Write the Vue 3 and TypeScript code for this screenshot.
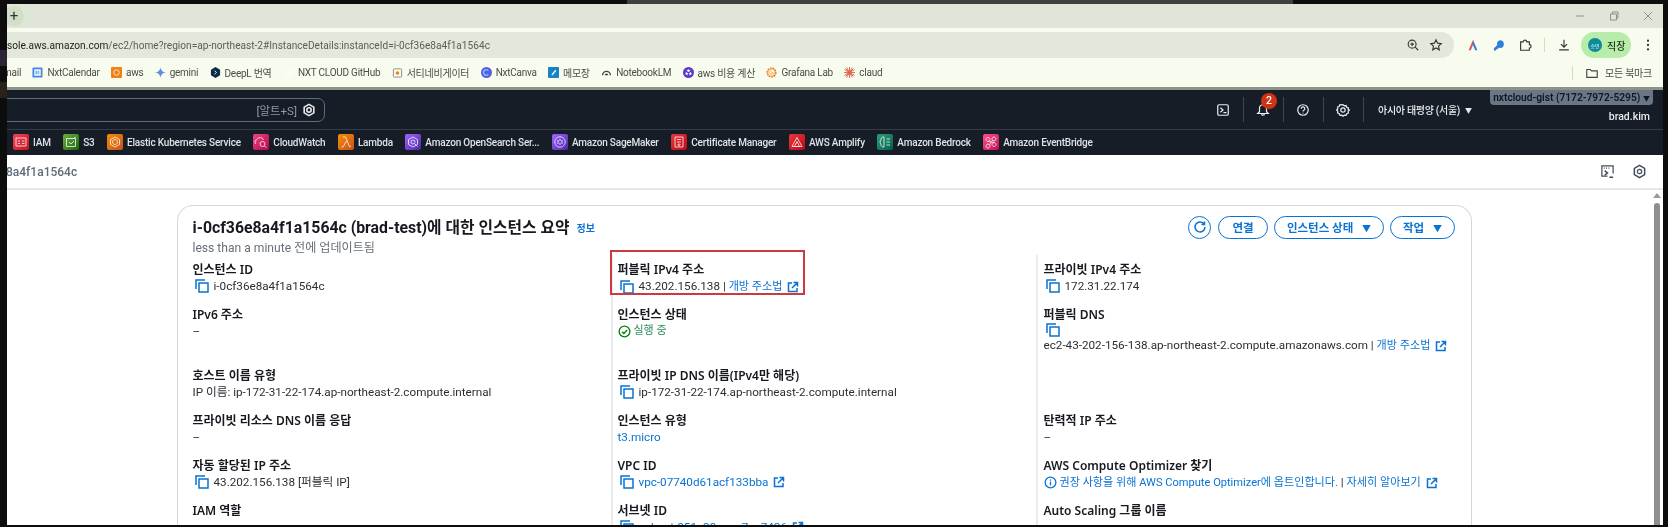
<script setup lang="ts">
interface Bookmark { label: string; icon: string }
interface Service { label: string; cls: string; d: string }
interface Field {
  label: string
  size?: 'tall' | 'xtall'
  value?: string
  link?: boolean
  copy?: boolean
  external?: boolean
  run?: boolean
  dash?: boolean
  boxed?: boolean
  dns?: boolean
  ip?: boolean
  info?: boolean
}

const bookmarks: Bookmark[] = [
  { label: 'NxtCalendar', icon: 'cal' },
  { label: 'aws', icon: 'aws' },
  { label: 'gemini', icon: 'gemini' },
  { label: 'DeepL 번역', icon: 'deepl' },
  { label: 'NXT CLOUD GitHub', icon: 'blank' },
  { label: '서티네비게이터', icon: 'nav' },
  { label: 'NxtCanva', icon: 'canva' },
  { label: '메모장', icon: 'memo' },
  { label: 'NotebookLM', icon: 'lm' },
  { label: 'aws 비용 계산', icon: 'cost' },
  { label: 'Grafana Lab', icon: 'grafana' },
  { label: 'claud', icon: 'claud' }
]

const services: Service[] = [
  { label: 'IAM', cls: 'red', d: 'M3 4h10v8H3zM5 7h2M5 9.500h2M9 7h2.500M9 9.500h2.500' },
  { label: 'S3', cls: 'green', d: 'M3.500 4.500h9v8h-9zM6 8l2 2 3-3M11 4l2-1' },
  { label: 'Elastic Kubernetes Service', cls: 'orange', d: 'M8 3l4.500 2.500v5L8 13l-4.500-2.500v-5zM8 5.500a2.500 2.500 0 1 0 .01 0' },
  { label: 'CloudWatch', cls: 'pink', d: 'M3 10a2.500 2.500 0 0 1 1-4.500A3.500 3.500 0 0 1 10.500 6M7 10a2.500 2.500 0 1 0 5 0 2.500 2.500 0 1 0-5 0M11.500 12l2 1.500' },
  { label: 'Lambda', cls: 'orange', d: 'M5 3h2.500l4 9.500H13M8.500 7L5 13H3.500' },
  { label: 'Amazon OpenSearch Ser...', cls: 'violet', d: 'M8 3l4.500 2.500v5L8 13l-4.500-2.500v-5zM6 8a2 2 0 1 0 4 0 2 2 0 1 0-4 0M10 10l2.500 2.500' },
  { label: 'Amazon SageMaker', cls: 'violet', d: 'M8 2.800a5.200 5.200 0 1 0 .01 0M8 5v2M8 9v2M6 6v4M10 6v4' },
  { label: 'Certificate Manager', cls: 'crimson', d: 'M4 3h8v10H4zM6 5.500h4M6 8h4M8 10a1 1 0 1 0 .01 0' },
  { label: 'AWS Amplify', cls: 'crimson', d: 'M8 3.500L13 12.500H3zM8 7.500L10.500 12.500H5.500z' },
  { label: 'Amazon Bedrock', cls: 'teal', d: 'M7 3a2.500 2.500 0 0 0-3 3 2.500 2.500 0 0 0 0 4 2.500 2.500 0 0 0 3 3zM9.500 5H13M9.500 8H13M9.500 11H13' },
  { label: 'Amazon EventBridge', cls: 'magenta', d: 'M5 3.500a2 2 0 1 0 .01 0M11 8.500a2 2 0 1 0 .01 0M5 10a2 2 0 1 0 .01 0M11 3a2 2 0 1 0 .01 0M5.500 7l5 2M6 11l4-5' }
]

const col1: Field[] = [
  { label: '인스턴스 ID', value: 'i-0cf36e8a4f1a1564c', copy: true },
  { label: 'IPv6 주소', dash: true, size: 'tall' },
  { label: '호스트 이름 유형', value: 'IP 이름: ip-172-31-22-174.ap-northeast-2.compute.internal' },
  { label: '프라이빗 리소스 DNS 이름 응답', dash: true },
  { label: '자동 할당된 IP 주소', value: '43.202.156.138 [퍼블릭 IP]', copy: true },
  { label: 'IAM 역할', value: '' }
]
const col2: Field[] = [
  { label: '퍼블릭 IPv4 주소', value: '43.202.156.138', copy: true, boxed: true, ip: true },
  { label: '인스턴스 상태', value: '실행 중', run: true, size: 'tall' },
  { label: '프라이빗 IP DNS 이름(IPv4만 해당)', value: 'ip-172-31-22-174.ap-northeast-2.compute.internal', copy: true },
  { label: '인스턴스 유형', value: 't3.micro', link: true },
  { label: 'VPC ID', value: 'vpc-07740d61acf133bba', copy: true, link: true, external: true },
  { label: '서브넷 ID', value: 'subnet-051c33aaaa7ac7426', copy: true, link: true, external: true }
]
const col3: Field[] = [
  { label: '프라이빗 IPv4 주소', value: '172.31.22.174', copy: true },
  { label: '퍼블릭 DNS', dns: true, size: 'xtall' },
  { label: '탄력적 IP 주소', dash: true },
  { label: 'AWS Compute Optimizer 찾기', info: true },
  { label: 'Auto Scaling 그룹 이름', value: '' }
]
const columns: Field[][] = [col1, col2, col3]
</script>

<template>
  <div class="screen">
    <div class="topstrip"><div class="behind"></div></div>
    <div class="middle">
      <div class="leftstrip">
        <i class="ghost g1"></i>
        <i class="ghost g2"></i>
      </div>
      <div class="window">
        <div class="tabstrip">
          <span class="newtab">+</span>
          <div class="winctl">
            <svg viewBox="0 0 12 12"><path d="M2 6h8" /></svg>
            <svg viewBox="0 0 12 12"><path d="M2.500 4h6v6h-6zM4.500 4V2h5.500v6H8.500" /></svg>
            <svg viewBox="0 0 12 12"><path d="M2 2l8 8M10 2l-8 8" /></svg>
          </div>
        </div>

        <div class="toolbar">
          <div class="omnibox">
            <div class="url"><b>sole.aws.amazon.com</b>/ec2/home?region=ap-northeast-2#InstanceDetails:instanceId=i-0cf36e8a4f1a1564c</div>
            <svg class="tb" viewBox="0 0 16 16"><circle cx="7" cy="7" r="4.500" /><path d="M10.500 10.500L14 14M5 7h4M7 5v4" /></svg>
            <svg class="tb star" viewBox="0 0 16 16"><path d="M8 2l1.800 3.900 4.200.5-3.100 2.900.8 4.200L8 11.400l-3.700 2.100.8-4.200L2 6.400l4.200-.5z" /></svg>
          </div>
          <div class="exts">
            <svg class="ext" viewBox="0 0 16 16"><path class="fa" d="M8 2L3 14h2.500L8 8z" /><path class="fb" d="M8 2l5 12h-2.500L8 8z" /></svg>
            <svg class="ext" viewBox="0 0 16 16"><path class="fk" d="M9 2.500a4.500 4.500 0 1 1 .1 9l-1.500-.5-1 1.500-1.500 0-.2 1.500-2.400.5-.5-2.500 4-4A4.500 4.500 0 0 1 9 2.500z" /></svg>
            <svg class="tb" viewBox="0 0 16 16"><path d="M3 4.500h3a2 2 0 0 1 4 0h3v3a2 2 0 0 1 0 4v2.500H3z" /></svg>
            <i class="tsep"></i>
            <svg class="tb" viewBox="0 0 16 16"><path d="M8 2v8M4.500 7L8 10.500 11.500 7M2.500 13.500h11" /></svg>
            <div class="profile"><span class="avatar">승민</span><span class="ptext">직장</span></div>
            <svg class="kebab" viewBox="0 0 4 16"><circle cx="2" cy="3" r="1.300" /><circle cx="2" cy="8" r="1.300" /><circle cx="2" cy="13" r="1.300" /></svg>
          </div>
        </div>

        <div class="bookmarks">
          <span class="bm mail">mail</span>
          <span v-for="b in bookmarks" :key="b.label" class="bm">
            <svg class="bmi" viewBox="0 0 12 12">
              <template v-if="b.icon === 'cal'"><rect x=".5" y=".5" width="11" height="11" rx="1" fill="#4285f4" /><rect x="2.500" y="2.500" width="7" height="7" fill="#fff" /><path d="M9.500 9.500H12V7.500z" fill="#fbbc04" /><rect x="4" y="4" width="1" height="4" fill="#1a73e8" /><rect x="6" y="4" width="2" height="4" fill="#8ab4f8" /></template>
              <template v-else-if="b.icon === 'aws'"><rect width="12" height="12" rx="1" fill="#f08113" /><circle cx="6" cy="6" r="3" fill="none" stroke="#fff" stroke-width=".8" /></template>
              <path v-else-if="b.icon === 'gemini'" d="M6 0c.5 3.500 2 5.500 6 6-4 .5-5.500 2.500-6 6-.5-3.500-2-5.500-6-6 4-.5 5.500-2.500 6-6z" fill="#5a8ee8" />
              <template v-else-if="b.icon === 'deepl'"><path d="M6 0l5 3v6l-5 3-5-3V3z" fill="#0f2b46" /><path d="M5 4l2 2-2 2" stroke="#fff" fill="none" /></template>
              <path v-else-if="b.icon === 'blank'" d="M6 1a5 5 0 1 0 .01 0" fill="#fafdf3" />
              <template v-else-if="b.icon === 'nav'"><rect x="1.500" y="2" width="9" height="9" rx="1" fill="none" stroke="#888" /><circle cx="6" cy="6.500" r="2" fill="#f08113" /></template>
              <template v-else-if="b.icon === 'canva'"><circle cx="6" cy="6" r="6" fill="#5a5ce6" /><path d="M8 4a3 3 0 1 0 0 4" fill="none" stroke="#7fe0f5" stroke-width="1.200" /></template>
              <template v-else-if="b.icon === 'memo'"><rect width="12" height="12" rx="1" fill="#1683c7" /><path d="M4 8l4-5 1 1-4 5H4z" fill="#fff" /></template>
              <path v-else-if="b.icon === 'lm'" d="M1 9a5 5 0 0 1 10 0H9.500a3.500 3.500 0 0 0-7 0zM4 9a2 2 0 0 1 4 0z" fill="#444" />
              <template v-else-if="b.icon === 'cost'"><circle cx="6" cy="6" r="6" fill="#5a3ec8" /><path d="M6 2.500l2 1.500-2 1.500L4 4zM3.500 5.500l2 1.500-1 2-2-1.500zM8.500 5.500l-2 1.500 1 2 2-1.500z" fill="#fff" /></template>
              <template v-else-if="b.icon === 'grafana'"><circle cx="6" cy="6" r="4.500" fill="none" stroke="#f2792b" stroke-width="2" stroke-dasharray="2 .7" /><path d="M6 4a2 2 0 1 0 2 2H6" fill="none" stroke="#f5b326" /></template>
              <path v-else d="M6 0v12M0 6h12M1.800 1.800l8.400 8.400M10.200 1.800l-8.400 8.400M3 .6l6 10.800M9 .6L3 11.400M.6 3l10.800 6M.6 9l10.800-6" stroke="#d9654a" stroke-width="1" />
            </svg>
            {{ b.label }}
          </span>
          <div class="allbm">
            <i class="bsep"></i>
            <svg class="tb folder" viewBox="0 0 16 16"><path d="M2 4h4l1.500 1.500H14V13H2z" /></svg>
            <span class="bm">모든 북마크</span>
          </div>
        </div>

        <div class="hline"></div>

        <header class="awshead">
          <div class="search">
            <span>[알트+S]</span>
            <svg class="hex" viewBox="0 0 16 16"><path d="M8 1.500l5.500 3.200v6.600L8 14.500l-5.500-3.200V4.700z" /><circle cx="8" cy="8" r="2.500" /></svg>
          </div>
          <div class="headright">
            <svg class="hi" viewBox="0 0 16 16"><rect x="2" y="2" width="12" height="12" rx="1.500" /><path d="M5 5.500L8 8l-3 2.500M8.500 11H12" /></svg>
            <i class="hsep"></i>
            <span class="bell">
              <svg class="hi" viewBox="0 0 16 16"><path d="M8 2a4 4 0 0 1 4 4v4l2 2H2l2-2V6a4 4 0 0 1 4-4zM6.500 12.500a1.500 1.500 0 0 0 3 0" /></svg>
              <span class="badge">2</span>
            </span>
            <i class="hsep"></i>
            <svg class="hi" viewBox="0 0 16 16"><circle cx="8" cy="8" r="6" /><path d="M6 6.500a2 2 0 1 1 3 1.700c-.7.400-1 .800-1 1.500M8 11v1" /></svg>
            <i class="hsep"></i>
            <svg class="hi" viewBox="0 0 16 16"><path d="M8 1.800l1.500 1.400 2-.3.800 1.900 1.900.8-.3 2L15.300 8l-1.400 1.400.3 2-1.900.8-.8 1.900-2-.3L8 15.200l-1.500-1.400-2 .3-.8-1.900-1.900-.8.3-2L.7 8l1.400-1.400-.3-2 1.900-.8.8-1.900 2 .3z" /><circle cx="8" cy="8" r="2.500" /></svg>
            <i class="hsep"></i>
            <span class="region">아시아 태평양 (서울)</span>
            <span class="caret">▼</span>
            <div class="account">
              <div class="acct">nxtcloud-gist (7172-7972-5295) <span class="acaret">▼</span></div>
              <div class="user">brad.kim</div>
            </div>
          </div>
        </header>

        <nav class="services">
          <span v-for="s in services" :key="s.label" class="svc">
            <span class="sico" :class="s.cls"><svg viewBox="0 0 16 16"><path :d="s.d" /></svg></span>
            {{ s.label }}
          </span>
        </nav>

        <div class="crumbs">
          <span class="crumb">8a4f1a1564c</span>
          <div class="crumbicons">
            <svg viewBox="0 0 16 16"><path d="M8 13H2V2h12v8M4 4.500h1M6.500 4.500h1M9 4.500h1" /><path class="thick" d="M5 7l3 2.500L5 12M10 14h4" /></svg>
            <svg viewBox="0 0 16 16"><path class="thick" d="M8 1.500l5.500 3.200v6.600L8 14.500l-5.500-3.200V4.700z" /><circle cx="8" cy="8" r="2.300" /></svg>
          </div>
        </div>

        <div class="body">
          <main class="page">
            <section class="card">
              <div class="cardhead">
                <div>
                  <h1>i-0cf36e8a4f1a1564c (brad-test)에 대한 인스턴스 요약 <a class="info">정보</a></h1>
                  <p class="updated">less than a minute 전에 업데이트됨</p>
                </div>
                <div class="actions">
                  <button class="refresh" type="button">
                    <svg viewBox="0 0 16 16"><path d="M12.200 5.200A5 5 0 1 0 13 8M12.500 2.500v3h-3" /></svg>
                  </button>
                  <button class="pill" type="button">연결</button>
                  <button class="pill wide" type="button">인스턴스 상태 <span class="tri">▼</span></button>
                  <button class="pill mid" type="button">작업 <span class="tri">▼</span></button>
                </div>
              </div>
              <div class="cols">
                <div v-for="(col, i) in columns" :key="i" class="col">
                  <div v-for="f in col" :key="f.label" class="field" :class="f.size">
                    <div class="flabel">{{ f.label }}</div>
                    <div v-if="f.dash" class="fvalue">–</div>
                    <div v-else-if="f.run" class="fvalue run">
                      <svg class="check" viewBox="0 0 14 14"><circle cx="7" cy="7" r="5.800" /><path d="M4.300 7.200l2 2 3.500-3.800" /></svg><span>{{ f.value }}</span>
                    </div>
                    <template v-else-if="f.dns">
                      <div class="fvalue"><svg class="copy" viewBox="0 0 14 14"><path d="M1 10V1h9M4 4h9v9H4z" /></svg></div>
                      <div class="fvalue"><span>ec2-43-202-156-138.ap-northeast-2.compute.amazonaws.com | <a class="lnk kr">개방 주소법</a></span><svg class="ext-link" viewBox="0 0 12 12"><path d="M5 2H1.500v8.500H10V7M6.500 1.500H10.500V5.500M10.500 1.500L5 7" /></svg></div>
                    </template>
                    <div v-else-if="f.info" class="fvalue">
                      <svg class="infoi" viewBox="0 0 14 14"><circle cx="7" cy="7" r="5.800" /><path d="M7 6.200v4M7 3.800v1.200" /></svg>
                      <span><a class="lnk kr">권장 사항을 위해 AWS Compute Optimizer에 옵트인합니다.</a> | <a class="lnk kr">자세히 알아보기</a></span><svg class="ext-link" viewBox="0 0 12 12"><path d="M5 2H1.500v8.500H10V7M6.500 1.500H10.500V5.500M10.500 1.500L5 7" /></svg>
                    </div>
                    <div v-else class="fvalue">
                      <svg v-if="f.copy" class="copy" viewBox="0 0 14 14"><path d="M1 10V1h9M4 4h9v9H4z" /></svg>
                      <span>
                        <a v-if="f.link" class="lnk">{{ f.value }}</a>
                        <template v-else>{{ f.value }}</template>
                        <template v-if="f.ip"> | <a class="lnk kr">개방 주소법</a></template>
                      </span>
                      <svg v-if="f.external || f.ip" class="ext-link" viewBox="0 0 12 12"><path d="M5 2H1.500v8.500H10V7M6.500 1.500H10.500V5.500M10.500 1.500L5 7" /></svg>
                    </div>
                    <div v-if="f.boxed" class="redbox"></div>
                  </div>
                </div>
              </div>
            </section>
          </main>
          <aside class="scrollbar">
            <i class="arrow"></i>
            <i class="thumb"></i>
          </aside>
        </div>
      </div>
      <div class="rightstrip"></div>
    </div>
  </div>
</template>

<style>
html, body { margin: 0; padding: 0; background: #0d0d0d; overflow: hidden; }
</style>

<style scoped>
.screen {
  width: 1668px;
  height: 527px;
  overflow: hidden;
  background: #0d0d0d;
  font-family: Roboto, "Noto Sans CJK KR", sans-serif;
  display: flex;
  flex-direction: column;
  filter: blur(.3px);
}
.topstrip { height: 4px; flex: none; padding-left: 627px; }
.behind { width: 666px; height: 4px; background: #3f3f3f; }
.middle { height: 521px; flex: none; display: flex; }
.leftstrip { width: 7px; flex: none; position: relative; }
.ghost { display: block; width: 7px; }
.g1 { height: 16px; margin-top: 46px; background: #2c2538; }
.g2 { height: 16px; margin-top: 16px; background: #2a211b; }
.window {
  width: 1656px;
  flex: none;
  display: flex;
  flex-direction: column;
  overflow: hidden;
  background: #fff;
}
.rightstrip { flex: 1; }

.tabstrip {
  height: 24px;
  flex: none;
  background: #dfe6d7;
  display: flex;
  align-items: center;
  overflow: hidden;
}
.newtab {
  width: 20px;
  height: 20px;
  margin-left: -3px;
  border-radius: 50%;
  background: #d2dfc7;
  display: flex;
  align-items: center;
  justify-content: center;
  font-size: 15px;
  color: #333;
  padding-bottom: 1px;
  box-sizing: border-box;
}
.winctl { margin-left: auto; display: flex; gap: 22px; padding-right: 9px; }
.winctl svg { width: 12px; height: 12px; fill: none; stroke: #8c9088; stroke-width: 1; }

.toolbar {
  height: 30px;
  flex: none;
  background: #f8fcef;
  display: flex;
  align-items: flex-end;
}
.omnibox {
  width: 1447px;
  height: 26px;
  flex: none;
  background: #e3e9da;
  border-radius: 0 13px 13px 0;
  display: flex;
  align-items: center;
  gap: 9px;
  padding-right: 11px;
  box-sizing: border-box;
}
.url {
  flex: 1;
  font-size: 10.150px;
  color: #5a5f58;
  white-space: nowrap;
  margin-right: 1px;
}
.url b { font-weight: 400; color: #1c1f1b; }
.tb { width: 14px; height: 14px; fill: none; stroke: #33372f; stroke-width: 1.300; flex: none; }
.exts { display: flex; align-items: center; height: 26px; padding-left: 12px; gap: 12px; }
.ext { width: 14px; height: 14px; flex: none; }
.fa { fill: #e5524a; }
.fb { fill: #2f7de1; }
.fk { fill: #2f7de1; }
.tsep { width: 1px; height: 14px; background: #cfe0c0; flex: none; }
.profile {
  width: 50px;
  height: 26px;
  margin-left: -2px;
  border-radius: 13px;
  background: #b8ecaa;
  display: flex;
  align-items: center;
  gap: 5px;
  padding-left: 7px;
  box-sizing: border-box;
}
.avatar {
  width: 14px;
  height: 14px;
  border-radius: 50%;
  background: #0e8a98;
  color: #dff;
  font-size: 5px;
  display: flex;
  align-items: center;
  justify-content: center;
}
.ptext { font-size: 10px; color: #1d3317; font-weight: 500; }
.kebab { width: 4px; height: 14px; fill: #33372f; margin-left: 3px; }

.bookmarks {
  height: 29px;
  flex: none;
  background: #f8fcef;
  display: flex;
  align-items: center;
  gap: 11.300px;
}
.bm {
  display: inline-flex;
  align-items: center;
  gap: 4px;
  font-size: 10px;
  letter-spacing: -.25px;
  color: #4a4d48;
  white-space: nowrap;
  flex: none;
}
.mail { margin-left: -4px; }
.bmi { width: 11px; height: 11px; flex: none; }
.allbm { margin-left: auto; display: flex; align-items: center; gap: 6px; padding-right: 11px; }
.bsep { width: 1px; height: 14px; background: #cfe0c0; margin-right: 6px; }
.folder { stroke: #44483f; }

.hline { height: 3px; flex: none; background: #8d928d; }

.awshead {
  height: 40px;
  flex: none;
  box-sizing: border-box;
  background: #161d26;
  border-bottom: 1px solid #333c47;
  display: flex;
  color: #e9ebed;
}
.search {
  width: 326px;
  height: 24px;
  margin: 8px 0 0 -8px;
  flex: none;
  box-sizing: border-box;
  border: 1.500px solid #5f6b7a;
  border-radius: 7px;
  display: flex;
  align-items: center;
  justify-content: flex-end;
  gap: 5px;
  padding-right: 8px;
  font-size: 11.500px;
  color: #8d99a8;
}
.hex { width: 14px; height: 14px; fill: none; stroke: #e9ebed; stroke-width: 1.800; }
.headright { margin-left: auto; display: flex; align-items: center; height: 39px; }
.hi { width: 14px; height: 14px; fill: none; stroke: #e9ebed; stroke-width: 1.400; flex: none; }
.hsep { width: 1px; height: 25px; background: #3d4652; margin: 0 12.500px; flex: none; }
.bell { position: relative; display: flex; }
.badge {
  position: absolute;
  left: 5px;
  top: -10px;
  width: 16px;
  height: 16px;
  border-radius: 50%;
  background: #d13212;
  color: #fff;
  font-size: 10.500px;
  font-weight: 500;
  display: flex;
  align-items: center;
  justify-content: center;
}
.region { font-size: 10px; letter-spacing: -.3px; font-weight: 500; color: #e9ebed; margin-left: 2px; }
.caret { font-size: 7px; margin-left: 5px; color: #e9ebed; }
.account {
  width: 163px;
  height: 39px;
  margin: 0 10px 0 18px;
  display: flex;
  flex-direction: column;
  align-items: flex-end;
}
.acct {
  width: 163px;
  height: 15px;
  background: #6a7686;
  color: #0f1720;
  font-size: 10.200px;
  font-weight: 600;
  border-radius: 0 0 4px 4px;
  line-height: 15px;
  text-align: center;
  white-space: nowrap;
}
.acaret { font-size: 7px; }
.user { font-size: 10.500px; font-weight: 500; padding: 5px 3px 0 0; color: #e9ebed; }

.services {
  height: 25px;
  flex: none;
  background: #161d26;
  display: flex;
  align-items: center;
  gap: 12.500px;
  padding: 0 0 1px 6px;
  box-sizing: border-box;
}
.svc {
  display: inline-flex;
  align-items: center;
  gap: 4px;
  font-size: 10px;
  letter-spacing: -.2px;
  font-weight: 500;
  color: #dfe3e8;
  white-space: nowrap;
  flex: none;
}
.sico { width: 16px; height: 16px; border-radius: 2px; display: flex; flex: none; }
.sico svg { width: 16px; height: 16px; fill: none; stroke: #fff; stroke-width: .9; opacity: .85; }
.red { background: linear-gradient(135deg, #f0455a, #c7131f); }
.green { background: linear-gradient(135deg, #6cae3e, #1b660f); }
.orange { background: linear-gradient(135deg, #f78e04, #c8511b); }
.pink { background: linear-gradient(135deg, #f34482, #b0084d); }
.violet { background: linear-gradient(135deg, #a166ff, #4d27a8); }
.crimson { background: linear-gradient(135deg, #e8383d, #bd0816); }
.teal { background: linear-gradient(135deg, #2a9e78, #055f4e); }
.magenta { background: linear-gradient(135deg, #ff4f8b, #bc1356); }

.crumbs {
  height: 33px;
  flex: none;
  display: flex;
  align-items: center;
  background: #fff;
  box-sizing: border-box;
}
.crumb { font-size: 12px; font-weight: 500; color: #5f6b7a; margin-left: -1px; }
.crumbicons { margin-left: auto; display: flex; gap: 17px; padding-right: 16px; }
.crumbicons svg { width: 15px; height: 15px; fill: none; stroke: #414d5c; stroke-width: 1.300; }
.crumbicons .thick { stroke-width: 1.600; }

.body { flex: 1; min-height: 0; display: flex; border-top: 2px solid #e5e7e9; overflow: hidden; }
.page { flex: 1; min-width: 0; overflow: hidden; padding: 15px 0 0 169.500px; }
.scrollbar {
  width: 8px;
  margin-right: 2px;
  flex: none;
  display: flex;
  flex-direction: column;
  align-items: center;
}
.arrow {
  width: 0;
  height: 0;
  margin-top: 3px;
  border: 4px solid transparent;
  border-top: 0;
  border-bottom: 5px solid #9a9a9a;
}
.thumb { width: 6px; flex: 1; margin-top: 5px; background: #8f8f8f; border-radius: 3px 3px 0 0; }

.card {
  width: 1295.500px;
  height: 340px;
  box-sizing: border-box;
  border: 1px solid #d5d8dc;
  border-bottom: 0;
  border-radius: 16px 16px 0 0;
  padding-left: 15px;
  color: #16191f;
}
.cardhead { height: 49px; display: flex; justify-content: space-between; position: relative; }
h1 {
  margin: 12px 0 0;
  font-size: 15.800px;
  line-height: 19px;
  font-weight: 700;
  color: #16191f;
  white-space: nowrap;
}
.info { font-size: 10px; color: #0972d3; font-weight: 700; margin-left: 3px; vertical-align: 1px; }
.updated { margin: 2px 0 0; font-size: 12.100px; line-height: 16px; color: #687078; }
.actions { display: flex; align-items: center; height: 24px; margin: 9px 16px 0 0; gap: 6px; }
.refresh {
  width: 23px;
  height: 23px;
  padding: 0;
  border: 1.500px solid #0972d3;
  border-radius: 50%;
  background: #fff;
  display: flex;
  align-items: center;
  justify-content: center;
  margin-right: 1px;
}
.refresh svg { width: 16px; height: 16px; fill: none; stroke: #0972d3; stroke-width: 1.500; }
.pill {
  width: 50px;
  height: 23px;
  padding: 0;
  box-sizing: border-box;
  border: 1.500px solid #0972d3;
  border-radius: 12px;
  background: #fff;
  color: #0972d3;
  font-family: inherit;
  font-size: 11.500px;
  font-weight: 700;
  white-space: nowrap;
}
.pill.wide { width: 110px; }
.pill.mid { width: 65px; }
.tri { font-size: 9px; margin-left: 6px; }

.cols { display: flex; height: 290px; }
.col { box-sizing: border-box; padding-top: 7px; flex: none; }
.col:nth-child(1) { width: 418px; }
.col:nth-child(2) { width: 425px; border-left: 2px solid #e9ebed; padding-left: 5px; }
.col:nth-child(3) { width: 436px; border-left: 2px solid #e9ebed; padding-left: 6px; }
.field { height: 45px; position: relative; }
.field.tall { height: 61px; }
.field.xtall { height: 106px; }
.flabel { font-family: "Noto Sans", "Noto Sans CJK KR", sans-serif; font-size: 12px; line-height: 16px; font-weight: 600; color: #16191f; white-space: nowrap; }
.fvalue {
  font-size: 11.700px;
  line-height: 16px;
  color: #2a2f35;
  white-space: pre;
  display: flex;
  align-items: center;
}
.run { color: #2f8f5b; font-size: 11px; }
.check { width: 13px; height: 13px; margin-right: 3px; fill: none; stroke: #037f0c; stroke-width: 1.400; flex: none; }
.copy { width: 14px; height: 14px; margin: 0 5px 0 2px; fill: none; stroke: #0972d3; stroke-width: 1.500; flex: none; }
.lnk { color: #0972d3; }
.kr { font-size: 11.100px; }
.ext-link { width: 12px; height: 12px; margin-left: 5px; fill: none; stroke: #0972d3; stroke-width: 1.500; flex: none; }
.infoi { width: 13px; height: 13px; margin-right: 3px; fill: none; stroke: #0972d3; stroke-width: 1.400; flex: none; }
.redbox {
  position: absolute;
  left: -8px;
  top: -12px;
  width: 195px;
  height: 45px;
  box-sizing: border-box;
  border: 2px solid #cc3a40;
}
</style>
